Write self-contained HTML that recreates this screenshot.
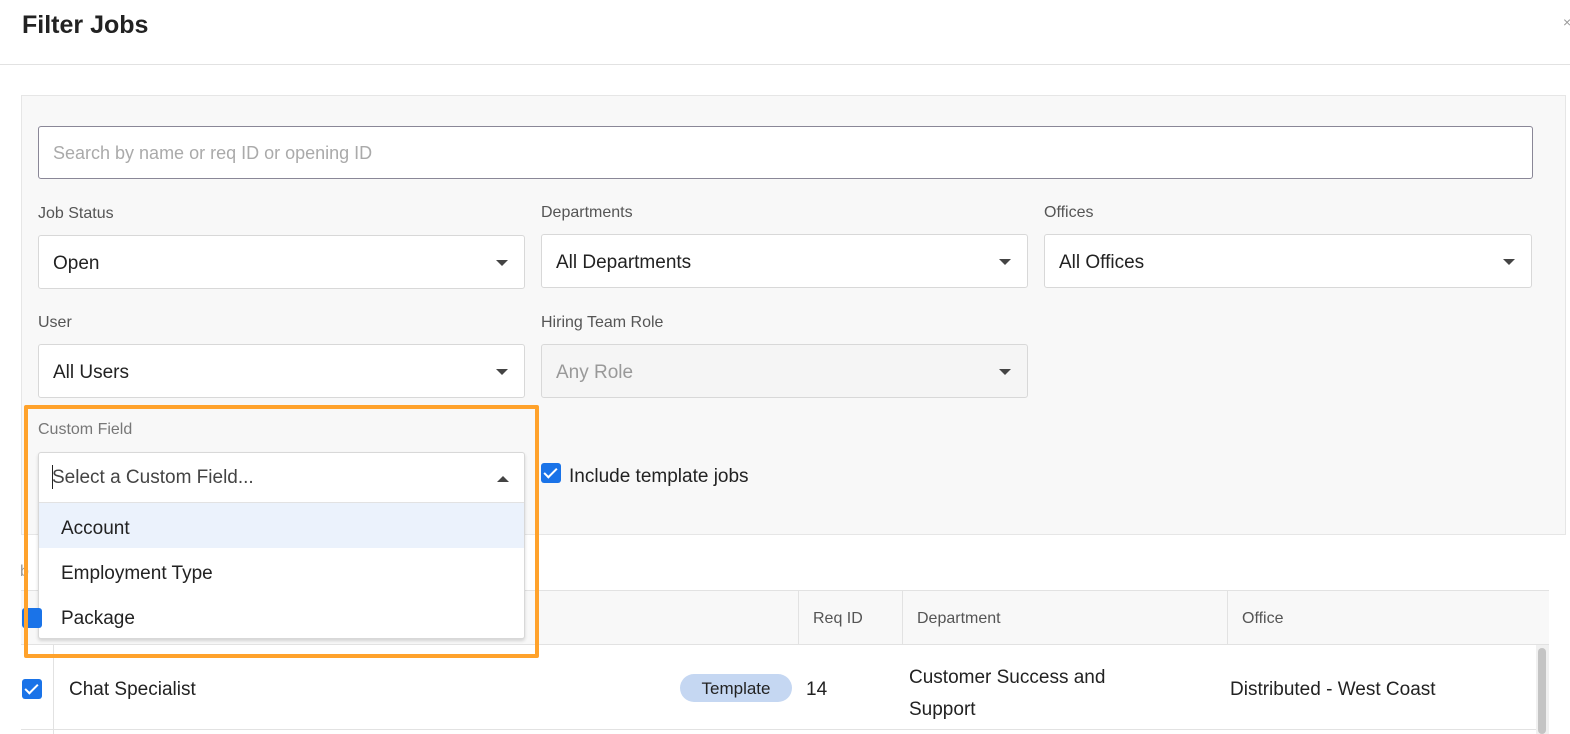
<!DOCTYPE html>
<html><head><style>
*{box-sizing:border-box;margin:0;padding:0}
body{width:1570px;height:734px;overflow:hidden;background:#fff;font-family:"Liberation Sans",sans-serif;color:#222;position:relative}
.a{position:absolute}
.lbl{font-size:16px;color:#555}
.sel{position:absolute;height:54px;border:1px solid #d8d8d8;border-radius:3px;background:#fff;font-size:19px;padding:17px 14px;color:#222}
.sel:after{content:"";position:absolute;right:16px;top:24px;border-left:6px solid transparent;border-right:6px solid transparent;border-top:6px solid #444}
.th{position:absolute;top:590px;height:55px;font-size:16px;color:#555;padding:20px 14px;border-left:1px solid #e2e2e2}
.cb{position:absolute;width:20px;height:20px;background:#1a73e8;border-radius:3px}
.cb:after{content:"";position:absolute;left:6px;top:2px;width:5px;height:11px;border:solid #fff;border-width:0 2.5px 2.5px 0;transform:rotate(45deg)}
</style></head><body>
<div class="a" style="left:22px;top:11px;font-size:25px;font-weight:bold;color:#222">Filter Jobs</div>
<div class="a" style="left:1563px;top:14px;font-size:14px;color:#999">×</div>
<div class="a" style="left:0;top:64px;width:1570px;height:1px;background:#e2e2e2"></div>
<div class="a" style="left:21px;top:95px;width:1545px;height:440px;background:#f8f8f8;border:1px solid #e6e6e6"></div>
<div class="a" style="left:38px;top:126px;width:1495px;height:53px;border:1px solid #8a8797;border-radius:3px;background:#fff;font-size:18px;color:#aaa;padding:16px 14px">Search by name or req ID or opening ID</div>
<div class="a lbl" style="left:38px;top:205px">Job Status</div>
<div class="a lbl" style="left:541px;top:204px">Departments</div>
<div class="a lbl" style="left:1044px;top:204px">Offices</div>
<div class="sel" style="left:38px;top:235px;width:487px">Open</div>
<div class="sel" style="left:541px;top:234px;width:487px">All Departments</div>
<div class="sel" style="left:1044px;top:234px;width:488px">All Offices</div>
<div class="a lbl" style="left:38px;top:314px">User</div>
<div class="a lbl" style="left:541px;top:314px">Hiring Team Role</div>
<div class="sel" style="left:38px;top:344px;width:487px">All Users</div>
<div class="sel" style="left:541px;top:344px;width:487px;background:#f5f5f5;color:#999">Any Role</div>
<div class="a lbl" style="left:38px;top:421px;color:#777">Custom Field</div>
<div class="cb" style="left:541px;top:463px"></div>
<div class="a" style="left:569px;top:466px;font-size:19px">Include template jobs</div>
<div class="a" style="left:20px;top:563px;font-size:16px;color:#999">b</div>
<div class="a" style="left:21px;top:590px;width:1528px;height:55px;background:#f8f8f8;border-top:1px solid #e2e2e2;border-bottom:1px solid #e2e2e2"></div>
<div class="th" style="left:798px;width:104px">Req ID</div>
<div class="th" style="left:902px;width:325px">Department</div>
<div class="th" style="left:1227px;width:322px">Office</div>
<div class="a" style="left:53px;top:645px;width:1px;height:89px;background:#e2e2e2"></div>
<div class="a" style="left:21px;top:729px;width:1515px;height:1px;background:#e2e2e2"></div>
<div class="cb" style="left:22px;top:679px"></div>
<div class="a" style="left:69px;top:679px;font-size:19px">Chat Specialist</div>
<div class="a" style="left:680px;top:674px;width:112px;height:28px;border-radius:14px;background:#c5d7f2;font-size:17px;text-align:center;padding-top:5px">Template</div>
<div class="a" style="left:806px;top:679px;font-size:19px">14</div>
<div class="a" style="left:909px;top:662px;font-size:19px;line-height:32px">Customer Success and<br>Support</div>
<div class="a" style="left:1230px;top:679px;font-size:19px">Distributed - West Coast</div>
<div class="a" style="left:1536px;top:645px;width:13px;height:89px;background:#f0f0f0"></div>
<div class="a" style="left:1538px;top:648px;width:8px;height:86px;background:#c4c4c4;border-radius:4px"></div>
<div class="a" style="left:38px;top:452px;width:487px;height:187px;background:#fff;border:1px solid #d8d8d8;border-radius:3px;box-shadow:0 2px 3px rgba(0,0,0,.15)"></div>
<div class="a" style="left:39px;top:502px;width:485px;height:1px;background:#e2e2e2"></div>
<div class="a" style="left:52px;top:467px;font-size:19px;color:#444">Select a Custom Field...</div>
<div class="a" style="left:52px;top:465px;width:1px;height:24px;background:#222"></div>
<div class="a" style="left:497px;top:476px;border-left:6px solid transparent;border-right:6px solid transparent;border-bottom:6px solid #444"></div>
<div class="a" style="left:39px;top:503px;width:485px;height:45px;background:#ebf2fc"></div>
<div class="a" style="left:61px;top:518px;font-size:19px">Account</div>
<div class="a" style="left:61px;top:563px;font-size:19px">Employment Type</div>
<div class="a" style="left:61px;top:608px;font-size:19px">Package</div>
<div class="a" style="left:22px;top:608px;width:20px;height:20px;background:#1a73e8;border-radius:3px"></div>
<div class="a" style="left:24px;top:405px;width:515px;height:253px;border:4px solid #ffa22b;border-radius:2px"></div>
</body></html>
